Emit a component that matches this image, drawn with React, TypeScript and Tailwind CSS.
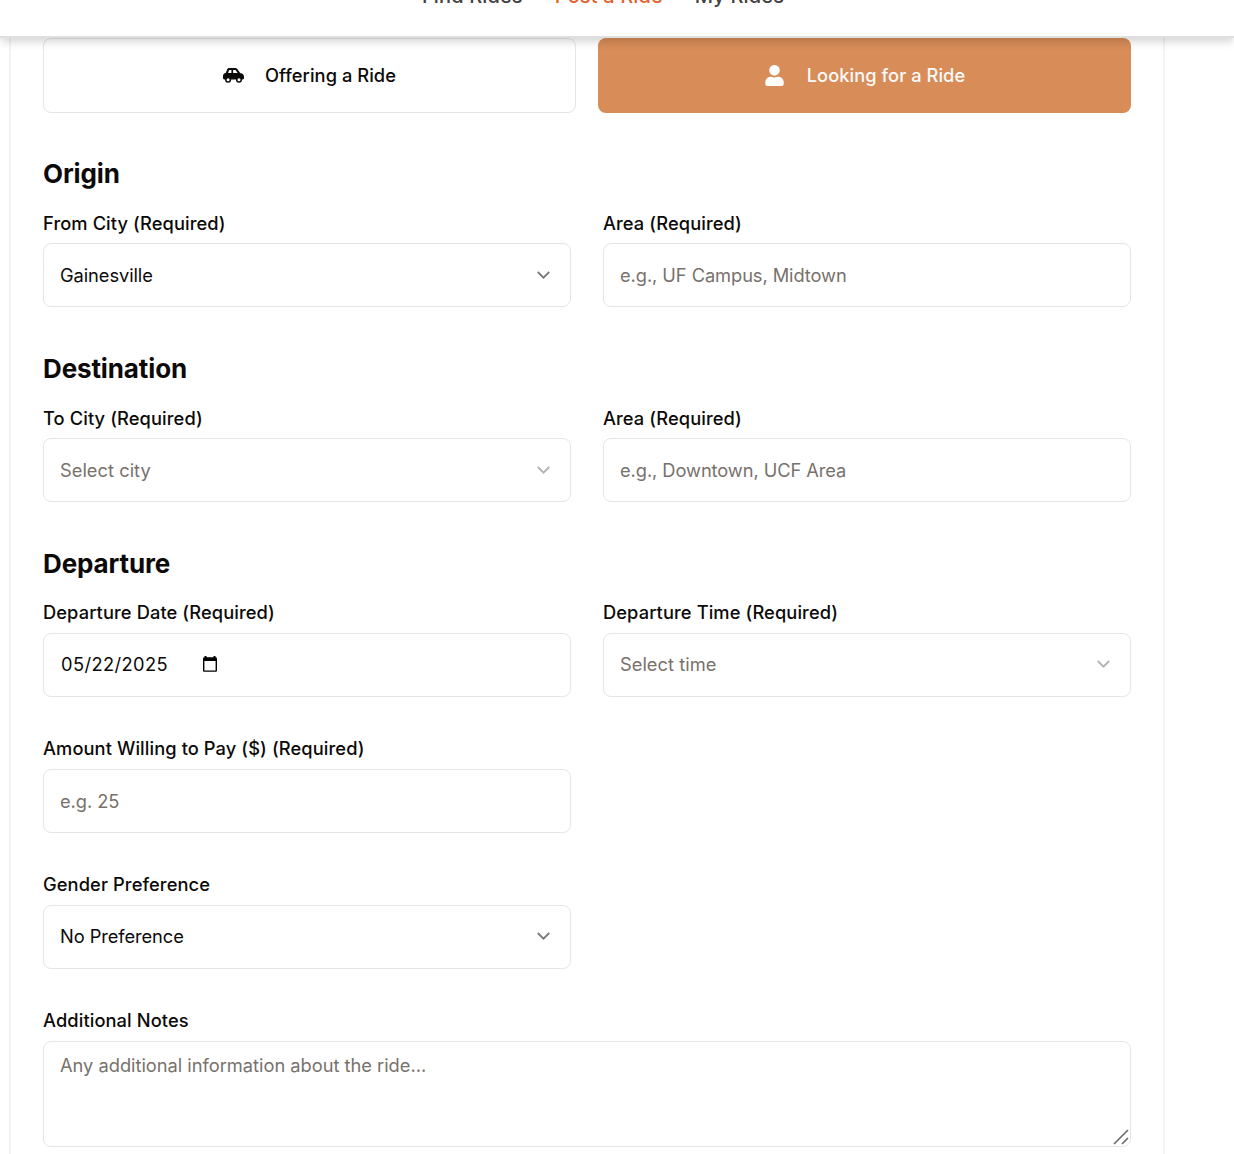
import type { ReactNode } from "react";
import { FaUser } from "react-icons/fa";

const box =
  "flex h-16 w-full items-center rounded-[8px] border border-[#e5e5e5] bg-white px-4 text-[18.3px] leading-6 tracking-[-0.08px]";

function CarIcon() {
  return (
    <svg className="mr-[21px]" width="21" height="15" viewBox="0 0 21 15" fill="currentColor">
      <path
        fillRule="evenodd"
        d="M2.8 5.1L4 1.7C4.4.6 5.2 0 6.3 0h5.9c.9 0 1.6.4 2.1 1.1L17.2 5c2.4.3 3.8 1.6 3.8 3.7v1.4c0 .8-.5 1.4-1.3 1.4H1.3C.5 11.5 0 10.9 0 10.1V8.2c0-1.7 1-2.8 2.8-3.1zM5.1 5h3.3V1.9H6.6c-.4 0-.6.2-.7.5zM10.1 5h4.6l-2-2.7c-.2-.3-.5-.4-.8-.4h-1.8z"
      />
      <circle cx="5.1" cy="11.8" r="2.3" fill="white" stroke="currentColor" strokeWidth="1.5" />
      <circle cx="16" cy="11.8" r="2.3" fill="white" stroke="currentColor" strokeWidth="1.5" />
    </svg>
  );
}

function Section({ title, children }: { title: string; children: ReactNode }) {
  return (
    <section className="h-[195px]">
      <h2 className="h-[66px] text-[26px] font-bold leading-9 tracking-[-0.12px]">{title}</h2>
      <div className="-mt-[11px] grid grid-cols-2 gap-8">{children}</div>
    </section>
  );
}

function Field({ label, raised = false, children }: { label: string; raised?: boolean; children: ReactNode }) {
  return (
    <div className="flex flex-col">
      <span
        className={
          "whitespace-nowrap text-[18.3px] font-medium leading-6 tracking-[0.09px] " +
          (raised ? "-mt-px h-[33px]" : "h-[32px]")
        }
      >
        {label}
      </span>
      {children}
    </div>
  );
}

function Select({ value, muted = false, raised = false }: { value: string; muted?: boolean; raised?: boolean }) {
  return (
    <button type="button" className={box + " justify-between" + (raised ? " pb-[2px]" : "")}>
      <span className={muted ? "tracking-[0.02px] text-[#78716c]" : ""}>{value}</span>
      <svg
        className={muted ? "mr-[4px] text-[#b5b2b0]" : "mr-[4px] text-[#7c7a79]"}
        width="13"
        height="8"
        viewBox="0 0 13 8"
        fill="none"
        stroke="currentColor"
        strokeWidth="1.8"
      >
        <path d="M.8 1l5.7 5.7L12.2 1" />
      </svg>
    </button>
  );
}

function TextInput({ placeholder }: { placeholder: string }) {
  return <input className={box + " placeholder:text-[#78716c]"} placeholder={placeholder} />;
}

export default function App() {
  return (
    <div className="h-[1154px] overflow-hidden bg-white font-['Inter',sans-serif] text-[#0c0a09]">
      <header className="relative z-10 -mt-[35px] flex h-[73px] justify-center border-b-2 border-[#dfdfdf] bg-white pt-[19px] shadow-[0_5px_8px_-1px_rgba(0,0,0,0.16)]">
        <nav className="mr-[28px] flex h-6 gap-8 whitespace-nowrap text-[20px] font-medium leading-6 tracking-[0.14px] text-[#404040]">
          <a>Find Rides</a>
          <a className="text-[#e0622f]">Post a Ride</a>
          <a>My Rides</a>
        </nav>
      </header>
      <main className="ml-[9px] h-[1116px] w-[1156px] border-x-2 border-[#f3f3f3] px-8">
        <div className="grid grid-cols-2 gap-[22px] text-[18.3px] font-medium tracking-[0.05px]">
          <button type="button" className="flex h-[75px] items-center justify-center rounded-[8px] border border-[#e5e5e5]">
            <CarIcon />
            Offering a Ride
          </button>
          <button type="button" className="flex h-[75px] items-center justify-center rounded-[8px] bg-[#d88c58] text-[#fafaf9]">
            <FaUser className="mr-[22px] size-[21px] text-white" />
            Looking for a Ride
          </button>
        </div>
        <div className="mt-[43px]">
          <Section title="Origin">
            <Field label="From City (Required)">
              <Select value="Gainesville" />
            </Field>
            <Field label="Area (Required)">
              <TextInput placeholder="e.g., UF Campus, Midtown" />
            </Field>
          </Section>
          <Section title="Destination">
            <Field label="To City (Required)">
              <Select value="Select city" muted />
            </Field>
            <Field label="Area (Required)">
              <TextInput placeholder="e.g., Downtown, UCF Area" />
            </Field>
          </Section>
          <Section title="Departure">
            <Field label="Departure Date (Required)" raised>
              <div className={box + " pb-[2px]"}>
                <span className="ml-[1px] tracking-[0.4px]">05/22/2025</span>
                <svg className="ml-[35px]" width="14" height="16" viewBox="0 0 14 16">
                  <path
                    fillRule="evenodd"
                    d="M1.5 0h2v1.2h7V0h2v1.2c.9 0 1.5.6 1.5 1.5v11.8c0 .8-.6 1.3-1.4 1.3H1.4C.6 15.8 0 15.3 0 14.5V2.7c0-.9.6-1.5 1.5-1.5zM1.4 5v9.4h11.2V5z"
                  />
                </svg>
              </div>
            </Field>
            <Field label="Departure Time (Required)" raised>
              <Select value="Select time" muted raised />
            </Field>
          </Section>
        </div>
        <div className="-mt-[4px] flex w-[528px] flex-col gap-10">
          <Field label="Amount Willing to Pay ($) (Required)" raised>
            <TextInput placeholder="e.g. 25" />
          </Field>
          <Field label="Gender Preference" raised>
            <Select value="No Preference" raised />
          </Field>
        </div>
        <div className="relative mt-10">
          <Field label="Additional Notes" raised>
            <textarea
              className="h-[106px] w-full resize-none rounded-[8px] border border-[#e5e5e5] px-4 py-[10px] text-[18.3px] leading-[26px] tracking-[-0.02px] placeholder:text-[#78716c]"
              placeholder="Any additional information about the ride..."
            />
          </Field>
          <svg
            className="absolute bottom-[2px] right-[2px]"
            width="16"
            height="16"
            viewBox="0 0 16 16"
            stroke="#6b6b6b"
            strokeWidth="1.6"
          >
            <path d="M1 15L15 1M9 15l6-6" />
          </svg>
        </div>
      </main>
    </div>
  );
}
